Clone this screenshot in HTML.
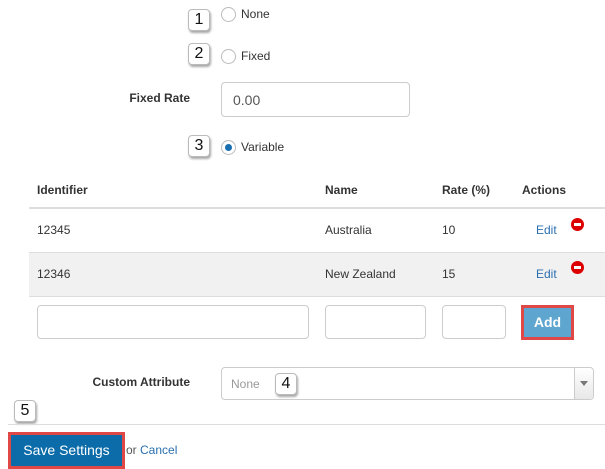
<!DOCTYPE html>
<html><head><style>
body{margin:0;width:605px;height:469px;background:#fff;font-family:"Liberation Sans",sans-serif;font-size:12px;color:#333;position:relative;overflow:hidden}
.a{position:absolute}
.badge{position:absolute;width:20px;height:20px;border:1px solid #bbb;border-radius:4px;background:#fff;box-shadow:1px 2px 2px rgba(0,0,0,.35);font-size:16px;color:#111;text-align:center;line-height:20px}
.radio{position:absolute;width:13px;height:13px;border:1px solid #bbb;border-radius:50%;background:#fff}
.lbl{position:absolute;font-weight:bold;color:#333}
.inp{position:absolute;border:1px solid #ccc;border-radius:4px;background:#fff;box-sizing:border-box}
.lnk{color:#2a6fb0}
</style></head><body>
<div class="badge" style="left:188px;top:9px">1</div>
<div class="radio" style="left:221px;top:7px"></div><div class="a" style="left:241px;top:7px">None</div>
<div class="badge" style="left:188px;top:43px">2</div>
<div class="radio" style="left:221px;top:49px"></div><div class="a" style="left:241px;top:49px">Fixed</div>
<div class="lbl" style="left:90px;width:100px;text-align:right;top:91px">Fixed Rate</div>
<div class="inp" style="left:221px;top:82px;width:189px;height:35px;padding:9px 11px;font-size:14px;color:#555">0.00</div>
<div class="badge" style="left:188px;top:135px">3</div>
<div class="radio" style="left:221px;top:140px"><div class="a" style="left:3px;top:3px;width:7px;height:7px;border-radius:50%;background:#1a6fb0"></div></div><div class="a" style="left:241px;top:140px">Variable</div>
<div class="lbl" style="left:37px;top:183px">Identifier</div>
<div class="lbl" style="left:325px;top:183px">Name</div>
<div class="lbl" style="left:442px;top:183px">Rate (%)</div>
<div class="lbl" style="left:522px;top:183px">Actions</div>
<div class="a" style="left:29px;top:207px;width:576px;height:2px;background:#ddd"></div>
<div class="a" style="left:29px;top:252px;width:576px;height:43px;background:#f1f1f1;border-top:1px solid #ddd;border-bottom:1px solid #ddd"></div>
<div class="a" style="left:37px;top:223px">12345</div><div class="a" style="left:325px;top:223px">Australia</div><div class="a" style="left:442px;top:223px">10</div><div class="a lnk" style="left:536px;top:223px">Edit</div>
<div class="a" style="left:37px;top:267px">12346</div><div class="a" style="left:325px;top:267px">New Zealand</div><div class="a" style="left:442px;top:267px">15</div><div class="a lnk" style="left:536px;top:267px">Edit</div>
<div class="a" style="left:571px;top:218px;width:13px;height:13px;border-radius:50%;background:#d00"><div class="a" style="left:3px;top:5px;width:7px;height:3px;background:#fff"></div></div>
<div class="a" style="left:571px;top:261px;width:13px;height:13px;border-radius:50%;background:#d00"><div class="a" style="left:3px;top:5px;width:7px;height:3px;background:#fff"></div></div>
<div class="inp" style="left:37px;top:305px;width:272px;height:34px"></div>
<div class="inp" style="left:325px;top:305px;width:101px;height:34px"></div>
<div class="inp" style="left:442px;top:305px;width:64px;height:34px"></div>
<div class="a" style="left:521px;top:305px;width:53px;height:35px;box-sizing:border-box;border:3px solid #e04848;background:#5ea6cf;color:#fff;font-size:14px;font-weight:bold;text-align:center;line-height:29px">Add</div>
<div class="lbl" style="left:60px;width:130px;text-align:right;top:375px">Custom Attribute</div>
<div class="inp" style="left:221px;top:367px;width:373px;height:33px;padding:9px;color:#999">None
<div class="a" style="right:0;top:0;width:18px;height:31px;border-left:1px solid #ccc;background:linear-gradient(#fff,#e8e8e8);border-radius:0 4px 4px 0"><div class="a" style="left:5px;top:13px;border-left:4px solid transparent;border-right:4px solid transparent;border-top:5px solid #777"></div></div></div>
<div class="badge" style="left:275px;top:373px">4</div>
<div class="badge" style="left:14px;top:400px">5</div>
<div class="a" style="left:8px;top:424px;width:597px;height:1px;background:#ddd"></div>
<div class="a" style="left:8px;top:432px;width:117px;height:37px;box-sizing:border-box;border:3px solid #e04848;background:#0b6ca9;color:#fff;font-size:14px;text-align:center;line-height:31px">Save Settings</div>
<div class="a" style="left:126px;top:443px;color:#555">or <span class="lnk">Cancel</span></div>
</body></html>
